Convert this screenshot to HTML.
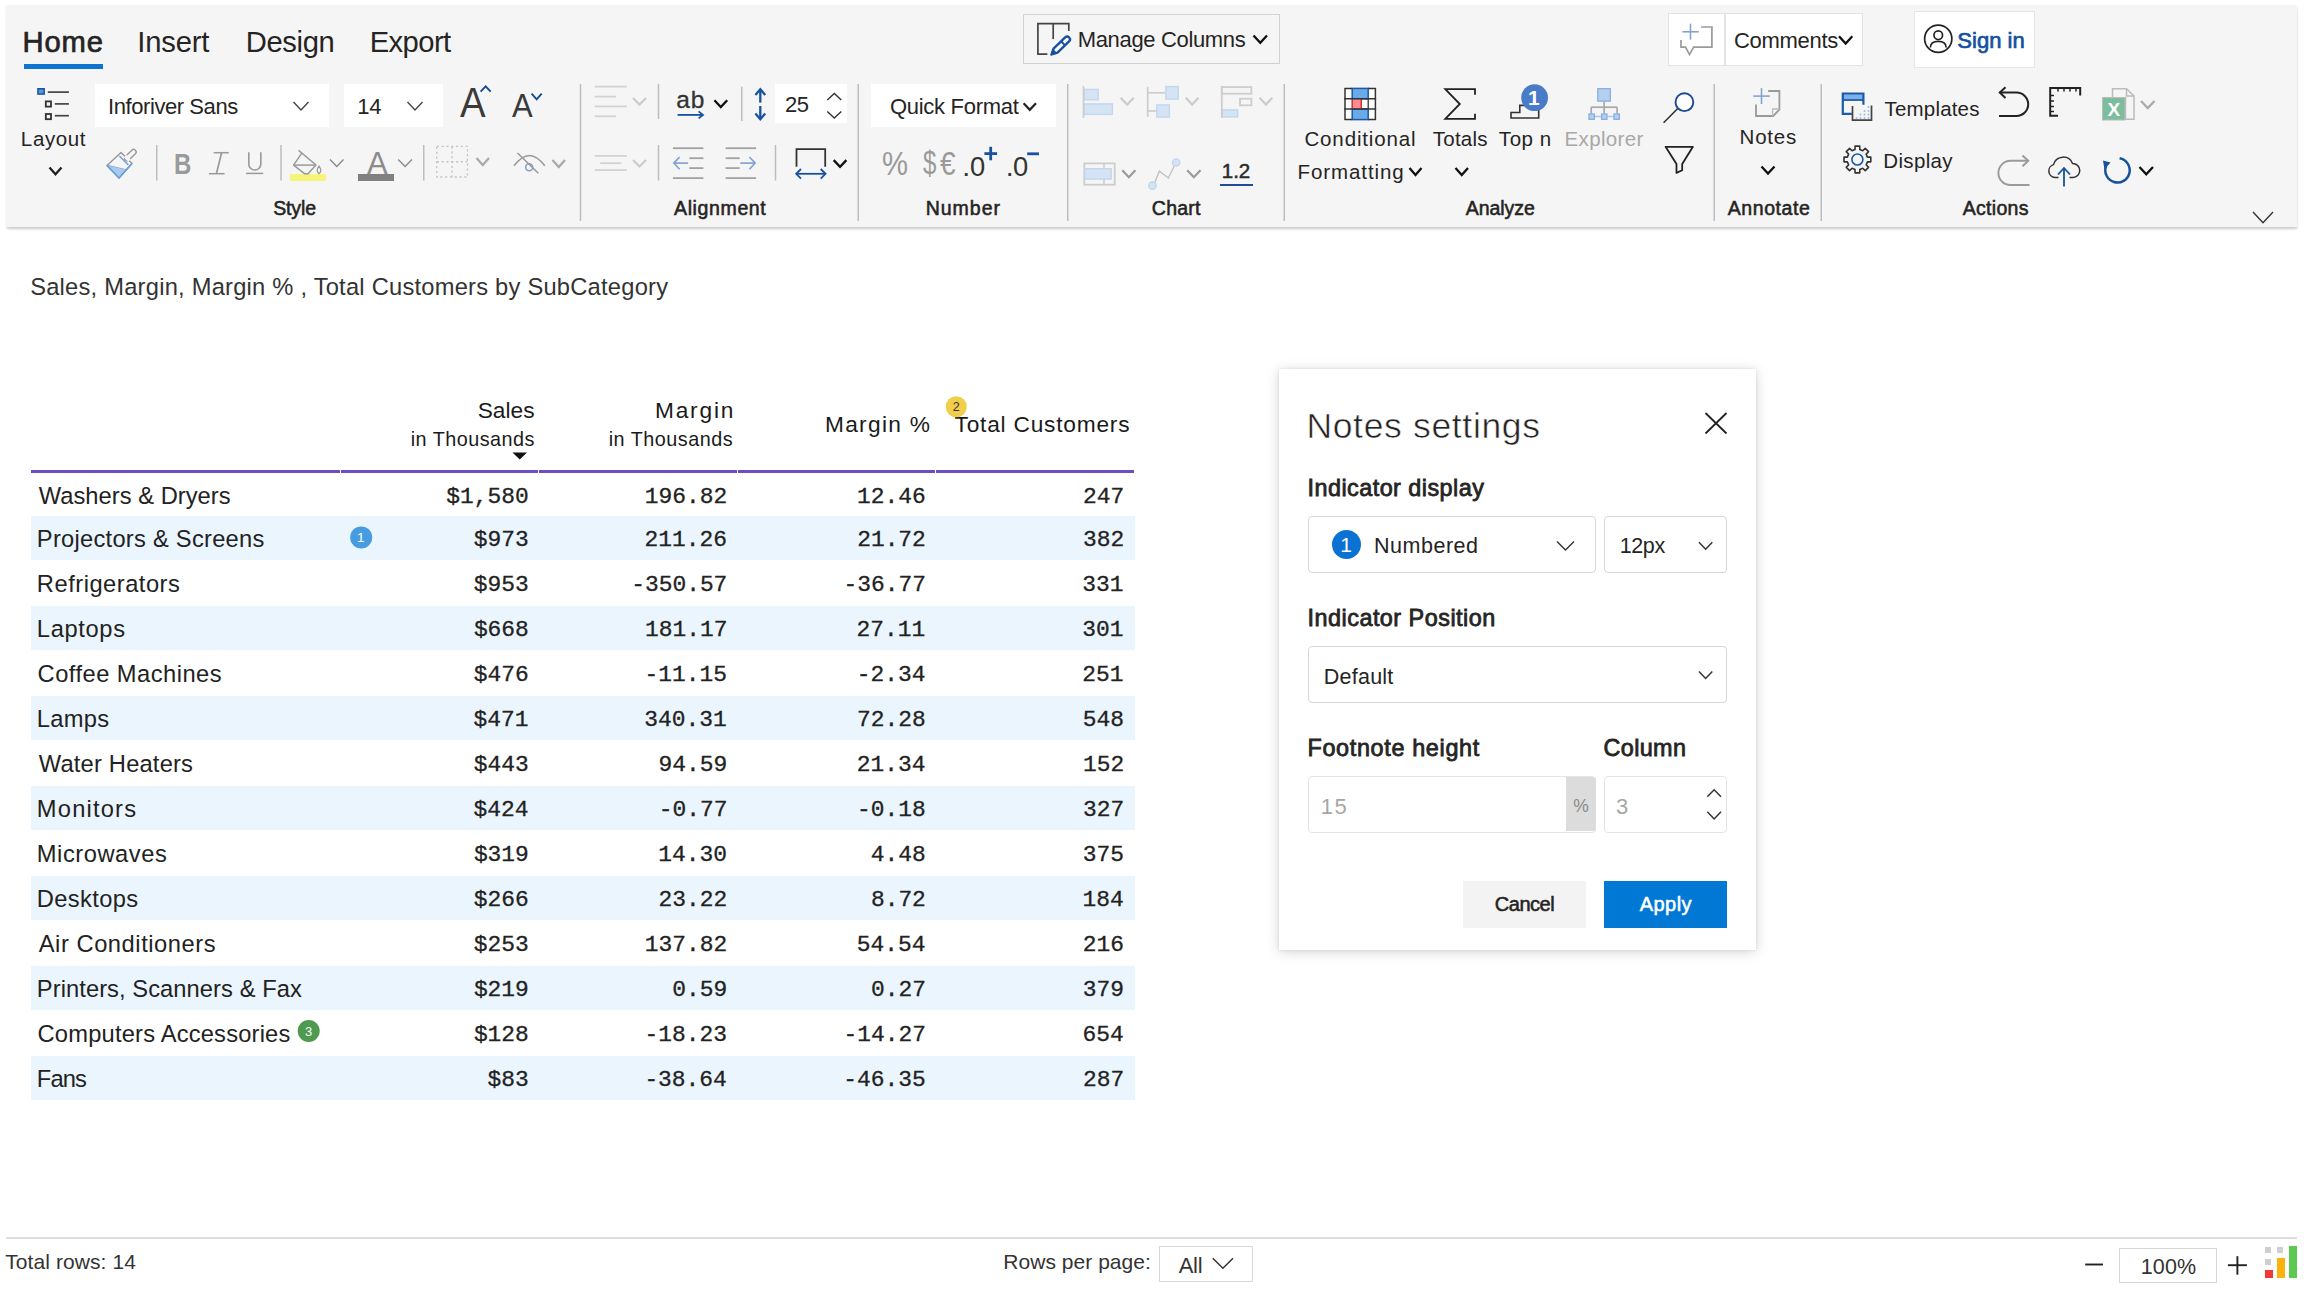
<!DOCTYPE html>
<html lang="en"><head><meta charset="utf-8"><title>Notes settings</title><style>
html,body{margin:0;padding:0;background:#fff;}
body{width:2304px;height:1293px;position:relative;overflow:hidden;font-family:"Liberation Sans",sans-serif;}
.t{position:absolute;white-space:pre;display:block;}
.b{position:absolute;}
#ov{position:absolute;left:0;top:0;pointer-events:none;}
</style></head><body>
<div class="b" style="left:6.00px;top:4.50px;width:2291.00px;height:222.50px;background:#f5f5f5;box-shadow:0 2px 2.5px -0.5px rgba(0,0,0,0.21);"></div>
<span class="t" style="left:22.61px;top:27px;font-size:29.2px;line-height:30px;color:#252423;letter-spacing:0.807px;-webkit-text-stroke:0.7px #252423;">Home</span>
<span class="t" style="left:137.37px;top:27px;font-size:29.2px;line-height:30px;color:#252423;letter-spacing:-0.188px;">Insert</span>
<span class="t" style="left:245.66px;top:27px;font-size:29.2px;line-height:30px;color:#252423;letter-spacing:-0.337px;">Design</span>
<span class="t" style="left:369.66px;top:27px;font-size:29.2px;line-height:30px;color:#252423;letter-spacing:-0.574px;">Export</span>
<div class="b" style="left:23.50px;top:63.50px;width:79.00px;height:5.00px;background:#0f73d2;"></div>
<div class="b" style="left:1022.50px;top:14.25px;width:257.00px;height:49.50px;border:1.5px solid #d2d2d2;box-sizing:border-box;"></div>
<span class="t" style="left:1077.74px;top:29px;font-size:22px;line-height:22px;color:#252423;letter-spacing:-0.343px;">Manage Columns</span>
<div class="b" style="left:1668.00px;top:12.50px;width:194.50px;height:53.75px;background:#fff;border:1.5px solid #e3e3e3;box-sizing:border-box;"></div>
<div class="b" style="left:1724.00px;top:14.00px;width:1.50px;height:51.00px;background:#e3e3e3;"></div>
<span class="t" style="left:1733.90px;top:30px;font-size:22px;line-height:22px;color:#252423;letter-spacing:-0.285px;">Comments</span>
<div class="b" style="left:1914.25px;top:11.25px;width:120.75px;height:56.75px;background:#fff;border:1.5px solid #e6e6e6;box-sizing:border-box;"></div>
<span class="t" style="left:1957.36px;top:30px;font-size:22px;line-height:22px;color:#14509f;letter-spacing:0.023px;-webkit-text-stroke:0.7px #14509f;">Sign in</span>
<div class="b" style="left:95.00px;top:84.00px;width:234.00px;height:43.00px;background:#fff;"></div>
<div class="b" style="left:344.00px;top:84.00px;width:98.50px;height:43.00px;background:#fff;"></div>
<span class="t" style="left:108.02px;top:96px;font-size:22px;line-height:22px;color:#252423;letter-spacing:-0.423px;">Inforiver Sans</span>
<span class="t" style="left:357.35px;top:96px;font-size:22px;line-height:22px;color:#252423;letter-spacing:-0.233px;">14</span>
<span class="t" style="left:20.86px;top:128px;font-size:20.5px;line-height:21px;color:#252423;letter-spacing:0.626px;">Layout</span>
<span class="t" style="left:460.20px;top:82px;font-size:41.7px;line-height:42px;color:#3a3a3a;transform:scaleX(0.92);transform-origin:0 0;">A</span>
<span class="t" style="left:511.80px;top:89px;font-size:32.8px;line-height:33px;color:#3a3a3a;transform:scaleX(0.945);transform-origin:0 0;">A</span>
<span class="t" style="left:173.75px;top:149px;font-size:30px;line-height:30px;font-weight:bold;color:#9a9a9a;transform:scaleX(0.8);transform-origin:0 0;">B</span>
<span class="t" style="left:367.00px;top:148px;font-size:31px;line-height:31px;color:#8c8c8c;">A</span>
<div class="b" style="left:290.00px;top:174.40px;width:35.75px;height:6.60px;background:#f5f57c;"></div>
<div class="b" style="left:358.30px;top:174.40px;width:36.00px;height:6.40px;background:#808080;"></div>
<span class="t" style="left:273.15px;top:198px;font-size:19.5px;line-height:20px;color:#252423;letter-spacing:-0.110px;-webkit-text-stroke:0.55px #252423;">Style</span>
<span class="t" style="left:676.17px;top:87px;font-size:24.5px;line-height:25px;color:#333;letter-spacing:1.052px;-webkit-text-stroke:0.3px #333;">ab</span>
<div class="b" style="left:775.00px;top:84.00px;width:71.75px;height:39.00px;background:#fff;"></div>
<span class="t" style="left:784.90px;top:94px;font-size:22px;line-height:22px;color:#252423;letter-spacing:-0.453px;">25</span>
<span class="t" style="left:674.02px;top:198px;font-size:19.5px;line-height:20px;color:#252423;letter-spacing:0.627px;-webkit-text-stroke:0.55px #252423;">Alignment</span>
<div class="b" style="left:870.75px;top:84.00px;width:185.25px;height:43.00px;background:#fff;"></div>
<span class="t" style="left:890.01px;top:96px;font-size:22px;line-height:22px;color:#252423;letter-spacing:-0.297px;">Quick Format</span>
<span class="t" style="left:881.66px;top:148px;font-size:32.5px;line-height:33px;color:#9a9a9a;transform:scaleX(0.9);transform-origin:0 0;">%</span>
<span class="t" style="left:922.88px;top:147px;font-size:32.5px;line-height:33px;color:#9a9a9a;transform:scaleX(0.74);transform-origin:0 0;">$</span>
<span class="t" style="left:939.54px;top:148px;font-size:32.5px;line-height:33px;color:#9a9a9a;transform:scaleX(0.86);transform-origin:0 0;">€</span>
<span class="t" style="left:962.33px;top:152px;font-size:28.5px;line-height:29px;color:#333;">.</span>
<span class="t" style="left:969.50px;top:152px;font-size:28.5px;line-height:29px;color:#333;transform:scaleX(0.96);transform-origin:0 0;">0</span>
<span class="t" style="left:1005.73px;top:152px;font-size:28.5px;line-height:29px;color:#333;">.</span>
<span class="t" style="left:1012.90px;top:152px;font-size:28.5px;line-height:29px;color:#333;transform:scaleX(0.96);transform-origin:0 0;">0</span>
<span class="t" style="left:925.72px;top:198px;font-size:19.5px;line-height:20px;color:#252423;letter-spacing:0.976px;-webkit-text-stroke:0.55px #252423;">Number</span>
<span class="t" style="left:1221.81px;top:160px;font-size:20.5px;line-height:21px;color:#2a2a2a;letter-spacing:-0.018px;-webkit-text-stroke:0.5px #2a2a2a;">1.2</span>
<div class="b" style="left:1220.20px;top:183.90px;width:32.70px;height:2.10px;background:#1f4e96;"></div>
<span class="t" style="left:1151.80px;top:198px;font-size:19.5px;line-height:20px;color:#252423;letter-spacing:0.249px;-webkit-text-stroke:0.55px #252423;">Chart</span>
<span class="t" style="left:1304.47px;top:128px;font-size:20.5px;line-height:21px;color:#252423;letter-spacing:0.850px;">Conditional</span>
<span class="t" style="left:1297.61px;top:161px;font-size:20.5px;line-height:21px;color:#252423;letter-spacing:0.903px;">Formatting</span>
<span class="t" style="left:1432.84px;top:128px;font-size:20.5px;line-height:21px;color:#252423;letter-spacing:0.223px;">Totals</span>
<span class="t" style="left:1498.84px;top:128px;font-size:20.5px;line-height:21px;color:#252423;letter-spacing:0.565px;">Top n</span>
<span class="t" style="left:1564.61px;top:128px;font-size:20.5px;line-height:21px;color:#a8a8a8;letter-spacing:0.333px;">Explorer</span>
<span class="t" style="left:1465.78px;top:198px;font-size:19.5px;line-height:20px;color:#252423;letter-spacing:-0.057px;-webkit-text-stroke:0.55px #252423;">Analyze</span>
<span class="t" style="left:1739.61px;top:126px;font-size:20.5px;line-height:21px;color:#252423;letter-spacing:0.773px;">Notes</span>
<span class="t" style="left:1727.78px;top:198px;font-size:19.5px;line-height:20px;color:#252423;letter-spacing:0.567px;-webkit-text-stroke:0.55px #252423;">Annotate</span>
<span class="t" style="left:1884.59px;top:98px;font-size:20.5px;line-height:21px;color:#252423;letter-spacing:0.174px;">Templates</span>
<span class="t" style="left:1883.36px;top:150px;font-size:20.5px;line-height:21px;color:#252423;letter-spacing:0.316px;">Display</span>
<span class="t" style="left:1962.78px;top:198px;font-size:19.5px;line-height:20px;color:#252423;letter-spacing:0.278px;-webkit-text-stroke:0.55px #252423;">Actions</span>
<span class="t" style="left:30.18px;top:275px;font-size:23.7px;line-height:24px;color:#333;letter-spacing:0.235px;">Sales, Margin, Margin % , Total Customers by SubCategory</span>
<span class="t" style="left:477.73px;top:399px;font-size:22.7px;line-height:23px;color:#1a1a1a;letter-spacing:0.021px;">Sales</span>
<span class="t" style="left:410.71px;top:429px;font-size:19.8px;line-height:20px;color:#1a1a1a;letter-spacing:0.484px;">in Thousands</span>
<span class="t" style="left:654.93px;top:399px;font-size:22.7px;line-height:23px;color:#1a1a1a;letter-spacing:1.822px;">Margin</span>
<span class="t" style="left:608.71px;top:429px;font-size:19.8px;line-height:20px;color:#1a1a1a;letter-spacing:0.507px;">in Thousands</span>
<span class="t" style="left:824.93px;top:413px;font-size:22.7px;line-height:23px;color:#1a1a1a;letter-spacing:1.322px;">Margin %</span>
<span class="t" style="left:954.55px;top:413px;font-size:22.7px;line-height:23px;color:#1a1a1a;letter-spacing:0.791px;">Total Customers</span>
<div class="b" style="left:30.75px;top:469.60px;width:308.85px;height:3.50px;background:#6a4fc0;"></div>
<div class="b" style="left:340.60px;top:469.60px;width:197.70px;height:3.50px;background:#6a4fc0;"></div>
<div class="b" style="left:539.30px;top:469.60px;width:197.30px;height:3.50px;background:#6a4fc0;"></div>
<div class="b" style="left:737.60px;top:469.60px;width:197.80px;height:3.50px;background:#6a4fc0;"></div>
<div class="b" style="left:936.40px;top:469.60px;width:198.10px;height:3.50px;background:#6a4fc0;"></div>
<div class="b" style="left:30.50px;top:515.50px;width:1104.50px;height:44.30px;background:#ebf5fe;"></div>
<div class="b" style="left:30.50px;top:605.50px;width:1104.50px;height:44.30px;background:#ebf5fe;"></div>
<div class="b" style="left:30.50px;top:695.50px;width:1104.50px;height:44.30px;background:#ebf5fe;"></div>
<div class="b" style="left:30.50px;top:785.50px;width:1104.50px;height:44.30px;background:#ebf5fe;"></div>
<div class="b" style="left:30.50px;top:875.50px;width:1104.50px;height:44.30px;background:#ebf5fe;"></div>
<div class="b" style="left:30.50px;top:965.50px;width:1104.50px;height:44.30px;background:#ebf5fe;"></div>
<div class="b" style="left:30.50px;top:1055.50px;width:1104.50px;height:44.30px;background:#ebf5fe;"></div>
<span class="t" style="left:38.75px;top:484px;font-size:23.7px;line-height:24px;color:#222;letter-spacing:0.037px;">Washers &amp; Dryers</span>
<span class="t" style="left:446.31px;top:486px;font-size:22.9px;line-height:23px;font-family:'Liberation Mono', monospace;color:#222;-webkit-text-stroke:0.3px #222;">$1,580</span>
<span class="t" style="left:644.84px;top:486px;font-size:22.9px;line-height:23px;font-family:'Liberation Mono', monospace;color:#222;-webkit-text-stroke:0.3px #222;">196.82</span>
<span class="t" style="left:856.95px;top:486px;font-size:22.9px;line-height:23px;font-family:'Liberation Mono', monospace;color:#222;-webkit-text-stroke:0.3px #222;">12.46</span>
<span class="t" style="left:1083.05px;top:486px;font-size:22.9px;line-height:23px;font-family:'Liberation Mono', monospace;color:#222;-webkit-text-stroke:0.3px #222;">247</span>
<span class="t" style="left:36.85px;top:527px;font-size:23.7px;line-height:24px;color:#222;letter-spacing:0.262px;">Projectors &amp; Screens</span>
<span class="t" style="left:473.78px;top:529px;font-size:22.9px;line-height:23px;font-family:'Liberation Mono', monospace;color:#222;-webkit-text-stroke:0.3px #222;">$973</span>
<span class="t" style="left:644.61px;top:529px;font-size:22.9px;line-height:23px;font-family:'Liberation Mono', monospace;color:#222;-webkit-text-stroke:0.3px #222;">211.26</span>
<span class="t" style="left:857.17px;top:529px;font-size:22.9px;line-height:23px;font-family:'Liberation Mono', monospace;color:#222;-webkit-text-stroke:0.3px #222;">21.72</span>
<span class="t" style="left:1082.94px;top:529px;font-size:22.9px;line-height:23px;font-family:'Liberation Mono', monospace;color:#222;-webkit-text-stroke:0.3px #222;">382</span>
<span class="t" style="left:36.85px;top:572px;font-size:23.7px;line-height:24px;color:#222;letter-spacing:0.509px;">Refrigerators</span>
<span class="t" style="left:473.78px;top:574px;font-size:22.9px;line-height:23px;font-family:'Liberation Mono', monospace;color:#222;-webkit-text-stroke:0.3px #222;">$953</span>
<span class="t" style="left:631.21px;top:574px;font-size:22.9px;line-height:23px;font-family:'Liberation Mono', monospace;color:#222;-webkit-text-stroke:0.3px #222;">-350.57</span>
<span class="t" style="left:843.56px;top:574px;font-size:22.9px;line-height:23px;font-family:'Liberation Mono', monospace;color:#222;-webkit-text-stroke:0.3px #222;">-36.77</span>
<span class="t" style="left:1082.37px;top:574px;font-size:22.9px;line-height:23px;font-family:'Liberation Mono', monospace;color:#222;-webkit-text-stroke:0.3px #222;">331</span>
<span class="t" style="left:36.85px;top:617px;font-size:23.7px;line-height:24px;color:#222;letter-spacing:0.650px;">Laptops</span>
<span class="t" style="left:473.89px;top:619px;font-size:22.9px;line-height:23px;font-family:'Liberation Mono', monospace;color:#222;-webkit-text-stroke:0.3px #222;">$668</span>
<span class="t" style="left:644.96px;top:619px;font-size:22.9px;line-height:23px;font-family:'Liberation Mono', monospace;color:#222;-webkit-text-stroke:0.3px #222;">181.17</span>
<span class="t" style="left:856.60px;top:619px;font-size:22.9px;line-height:23px;font-family:'Liberation Mono', monospace;color:#222;-webkit-text-stroke:0.3px #222;">27.11</span>
<span class="t" style="left:1082.37px;top:619px;font-size:22.9px;line-height:23px;font-family:'Liberation Mono', monospace;color:#222;-webkit-text-stroke:0.3px #222;">301</span>
<span class="t" style="left:37.56px;top:662px;font-size:23.7px;line-height:24px;color:#222;letter-spacing:0.479px;">Coffee Machines</span>
<span class="t" style="left:473.78px;top:664px;font-size:22.9px;line-height:23px;font-family:'Liberation Mono', monospace;color:#222;-webkit-text-stroke:0.3px #222;">$476</span>
<span class="t" style="left:644.61px;top:664px;font-size:22.9px;line-height:23px;font-family:'Liberation Mono', monospace;color:#222;-webkit-text-stroke:0.3px #222;">-11.15</span>
<span class="t" style="left:856.72px;top:664px;font-size:22.9px;line-height:23px;font-family:'Liberation Mono', monospace;color:#222;-webkit-text-stroke:0.3px #222;">-2.34</span>
<span class="t" style="left:1082.37px;top:664px;font-size:22.9px;line-height:23px;font-family:'Liberation Mono', monospace;color:#222;-webkit-text-stroke:0.3px #222;">251</span>
<span class="t" style="left:36.85px;top:707px;font-size:23.7px;line-height:24px;color:#222;letter-spacing:0.263px;">Lamps</span>
<span class="t" style="left:473.43px;top:709px;font-size:22.9px;line-height:23px;font-family:'Liberation Mono', monospace;color:#222;-webkit-text-stroke:0.3px #222;">$471</span>
<span class="t" style="left:644.27px;top:709px;font-size:22.9px;line-height:23px;font-family:'Liberation Mono', monospace;color:#222;-webkit-text-stroke:0.3px #222;">340.31</span>
<span class="t" style="left:857.06px;top:709px;font-size:22.9px;line-height:23px;font-family:'Liberation Mono', monospace;color:#222;-webkit-text-stroke:0.3px #222;">72.28</span>
<span class="t" style="left:1082.83px;top:709px;font-size:22.9px;line-height:23px;font-family:'Liberation Mono', monospace;color:#222;-webkit-text-stroke:0.3px #222;">548</span>
<span class="t" style="left:38.75px;top:752px;font-size:23.7px;line-height:24px;color:#222;letter-spacing:0.199px;">Water Heaters</span>
<span class="t" style="left:473.78px;top:754px;font-size:22.9px;line-height:23px;font-family:'Liberation Mono', monospace;color:#222;-webkit-text-stroke:0.3px #222;">$443</span>
<span class="t" style="left:658.46px;top:754px;font-size:22.9px;line-height:23px;font-family:'Liberation Mono', monospace;color:#222;-webkit-text-stroke:0.3px #222;">94.59</span>
<span class="t" style="left:856.72px;top:754px;font-size:22.9px;line-height:23px;font-family:'Liberation Mono', monospace;color:#222;-webkit-text-stroke:0.3px #222;">21.34</span>
<span class="t" style="left:1082.94px;top:754px;font-size:22.9px;line-height:23px;font-family:'Liberation Mono', monospace;color:#222;-webkit-text-stroke:0.3px #222;">152</span>
<span class="t" style="left:36.85px;top:797px;font-size:23.7px;line-height:24px;color:#222;letter-spacing:1.196px;">Monitors</span>
<span class="t" style="left:473.55px;top:799px;font-size:22.9px;line-height:23px;font-family:'Liberation Mono', monospace;color:#222;-webkit-text-stroke:0.3px #222;">$424</span>
<span class="t" style="left:658.69px;top:799px;font-size:22.9px;line-height:23px;font-family:'Liberation Mono', monospace;color:#222;-webkit-text-stroke:0.3px #222;">-0.77</span>
<span class="t" style="left:857.06px;top:799px;font-size:22.9px;line-height:23px;font-family:'Liberation Mono', monospace;color:#222;-webkit-text-stroke:0.3px #222;">-0.18</span>
<span class="t" style="left:1083.05px;top:799px;font-size:22.9px;line-height:23px;font-family:'Liberation Mono', monospace;color:#222;-webkit-text-stroke:0.3px #222;">327</span>
<span class="t" style="left:36.85px;top:842px;font-size:23.7px;line-height:24px;color:#222;letter-spacing:0.539px;">Microwaves</span>
<span class="t" style="left:473.89px;top:844px;font-size:22.9px;line-height:23px;font-family:'Liberation Mono', monospace;color:#222;-webkit-text-stroke:0.3px #222;">$319</span>
<span class="t" style="left:658.35px;top:844px;font-size:22.9px;line-height:23px;font-family:'Liberation Mono', monospace;color:#222;-webkit-text-stroke:0.3px #222;">14.30</span>
<span class="t" style="left:870.79px;top:844px;font-size:22.9px;line-height:23px;font-family:'Liberation Mono', monospace;color:#222;-webkit-text-stroke:0.3px #222;">4.48</span>
<span class="t" style="left:1082.71px;top:844px;font-size:22.9px;line-height:23px;font-family:'Liberation Mono', monospace;color:#222;-webkit-text-stroke:0.3px #222;">375</span>
<span class="t" style="left:36.85px;top:887px;font-size:23.7px;line-height:24px;color:#222;letter-spacing:0.363px;">Desktops</span>
<span class="t" style="left:473.78px;top:889px;font-size:22.9px;line-height:23px;font-family:'Liberation Mono', monospace;color:#222;-webkit-text-stroke:0.3px #222;">$266</span>
<span class="t" style="left:658.57px;top:889px;font-size:22.9px;line-height:23px;font-family:'Liberation Mono', monospace;color:#222;-webkit-text-stroke:0.3px #222;">23.22</span>
<span class="t" style="left:870.91px;top:889px;font-size:22.9px;line-height:23px;font-family:'Liberation Mono', monospace;color:#222;-webkit-text-stroke:0.3px #222;">8.72</span>
<span class="t" style="left:1082.48px;top:889px;font-size:22.9px;line-height:23px;font-family:'Liberation Mono', monospace;color:#222;-webkit-text-stroke:0.3px #222;">184</span>
<span class="t" style="left:38.75px;top:932px;font-size:23.7px;line-height:24px;color:#222;letter-spacing:0.552px;">Air Conditioners</span>
<span class="t" style="left:473.78px;top:934px;font-size:22.9px;line-height:23px;font-family:'Liberation Mono', monospace;color:#222;-webkit-text-stroke:0.3px #222;">$253</span>
<span class="t" style="left:644.84px;top:934px;font-size:22.9px;line-height:23px;font-family:'Liberation Mono', monospace;color:#222;-webkit-text-stroke:0.3px #222;">137.82</span>
<span class="t" style="left:856.72px;top:934px;font-size:22.9px;line-height:23px;font-family:'Liberation Mono', monospace;color:#222;-webkit-text-stroke:0.3px #222;">54.54</span>
<span class="t" style="left:1082.71px;top:934px;font-size:22.9px;line-height:23px;font-family:'Liberation Mono', monospace;color:#222;-webkit-text-stroke:0.3px #222;">216</span>
<span class="t" style="left:36.85px;top:977px;font-size:23.7px;line-height:24px;color:#222;letter-spacing:0.072px;">Printers, Scanners &amp; Fax</span>
<span class="t" style="left:473.89px;top:979px;font-size:22.9px;line-height:23px;font-family:'Liberation Mono', monospace;color:#222;-webkit-text-stroke:0.3px #222;">$219</span>
<span class="t" style="left:672.19px;top:979px;font-size:22.9px;line-height:23px;font-family:'Liberation Mono', monospace;color:#222;-webkit-text-stroke:0.3px #222;">0.59</span>
<span class="t" style="left:871.02px;top:979px;font-size:22.9px;line-height:23px;font-family:'Liberation Mono', monospace;color:#222;-webkit-text-stroke:0.3px #222;">0.27</span>
<span class="t" style="left:1082.83px;top:979px;font-size:22.9px;line-height:23px;font-family:'Liberation Mono', monospace;color:#222;-webkit-text-stroke:0.3px #222;">379</span>
<span class="t" style="left:37.56px;top:1022px;font-size:23.7px;line-height:24px;color:#222;letter-spacing:0.199px;">Computers Accessories</span>
<span class="t" style="left:473.89px;top:1024px;font-size:22.9px;line-height:23px;font-family:'Liberation Mono', monospace;color:#222;-webkit-text-stroke:0.3px #222;">$128</span>
<span class="t" style="left:644.61px;top:1024px;font-size:22.9px;line-height:23px;font-family:'Liberation Mono', monospace;color:#222;-webkit-text-stroke:0.3px #222;">-18.23</span>
<span class="t" style="left:843.56px;top:1024px;font-size:22.9px;line-height:23px;font-family:'Liberation Mono', monospace;color:#222;-webkit-text-stroke:0.3px #222;">-14.27</span>
<span class="t" style="left:1082.48px;top:1024px;font-size:22.9px;line-height:23px;font-family:'Liberation Mono', monospace;color:#222;-webkit-text-stroke:0.3px #222;">654</span>
<span class="t" style="left:36.85px;top:1067px;font-size:23.7px;line-height:24px;color:#222;letter-spacing:-0.863px;">Fans</span>
<span class="t" style="left:487.51px;top:1069px;font-size:22.9px;line-height:23px;font-family:'Liberation Mono', monospace;color:#222;-webkit-text-stroke:0.3px #222;">$83</span>
<span class="t" style="left:644.38px;top:1069px;font-size:22.9px;line-height:23px;font-family:'Liberation Mono', monospace;color:#222;-webkit-text-stroke:0.3px #222;">-38.64</span>
<span class="t" style="left:843.21px;top:1069px;font-size:22.9px;line-height:23px;font-family:'Liberation Mono', monospace;color:#222;-webkit-text-stroke:0.3px #222;">-46.35</span>
<span class="t" style="left:1083.05px;top:1069px;font-size:22.9px;line-height:23px;font-family:'Liberation Mono', monospace;color:#222;-webkit-text-stroke:0.3px #222;">287</span>
<div class="b" style="left:1279.25px;top:368.75px;width:476.50px;height:581.25px;background:#fff;box-shadow:0 2px 12px rgba(0,0,0,0.17),0 0 3px rgba(0,0,0,0.09);"></div>
<span class="t" style="left:1306.41px;top:408px;font-size:35.5px;line-height:36px;color:#252423;letter-spacing:0.668px;-webkit-text-stroke:0.55px #fff;">Notes settings</span>
<span class="t" style="left:1307.54px;top:476px;font-size:23.4px;line-height:24px;color:#252423;letter-spacing:0.456px;-webkit-text-stroke:0.8px #252423;">Indicator display</span>
<div class="b" style="left:1308.25px;top:516.25px;width:287.50px;height:56.75px;background:#fff;border:1.5px solid #d6d6d6;box-sizing:border-box;border-radius:4px;"></div>
<div class="b" style="left:1603.75px;top:516.25px;width:123.00px;height:56.75px;background:#fff;border:1.5px solid #d6d6d6;box-sizing:border-box;border-radius:4px;"></div>
<span class="t" style="left:1374.03px;top:535px;font-size:21.5px;line-height:22px;color:#252423;letter-spacing:0.514px;">Numbered</span>
<span class="t" style="left:1619.64px;top:535px;font-size:21.5px;line-height:22px;color:#252423;letter-spacing:-0.360px;">12px</span>
<span class="t" style="left:1307.54px;top:606px;font-size:23.4px;line-height:24px;color:#252423;letter-spacing:0.488px;-webkit-text-stroke:0.8px #252423;">Indicator Position</span>
<div class="b" style="left:1308.25px;top:646.25px;width:418.50px;height:56.25px;background:#fff;border:1.5px solid #d6d6d6;box-sizing:border-box;border-radius:4px;"></div>
<span class="t" style="left:1323.78px;top:666px;font-size:21.5px;line-height:22px;color:#252423;letter-spacing:0.237px;">Default</span>
<span class="t" style="left:1307.53px;top:736px;font-size:23.4px;line-height:24px;color:#252423;letter-spacing:0.652px;-webkit-text-stroke:0.8px #252423;">Footnote height</span>
<span class="t" style="left:1603.48px;top:736px;font-size:23.4px;line-height:24px;color:#252423;letter-spacing:0.387px;-webkit-text-stroke:0.8px #252423;">Column</span>
<div class="b" style="left:1308.25px;top:776.25px;width:287.50px;height:56.25px;background:#fff;border:1.5px solid #e4e4e4;box-sizing:border-box;border-radius:4px;"></div>
<div class="b" style="left:1565.75px;top:777.00px;width:30.00px;height:54.00px;background:#dcdcdc;border-radius:0 3px 3px 0;"></div>
<div class="b" style="left:1603.75px;top:776.25px;width:123.00px;height:56.25px;background:#fff;border:1.5px solid #e4e4e4;box-sizing:border-box;border-radius:4px;"></div>
<span class="t" style="left:1320.85px;top:796px;font-size:22px;line-height:22px;color:#a6a6a6;letter-spacing:1.347px;">15</span>
<span class="t" style="left:1615.98px;top:796px;font-size:22px;line-height:22px;color:#a6a6a6;">3</span>
<span class="t" style="left:1573.14px;top:797px;font-size:17.5px;line-height:18px;color:#8a8a8a;">%</span>
<div class="b" style="left:1463.25px;top:880.50px;width:122.50px;height:47.50px;background:#f3f3f3;"></div>
<div class="b" style="left:1604.00px;top:880.50px;width:122.75px;height:47.50px;background:#0078d4;"></div>
<span class="t" style="left:1494.78px;top:894px;font-size:20px;line-height:20px;color:#252423;letter-spacing:-0.462px;-webkit-text-stroke:0.55px #252423;">Cancel</span>
<span class="t" style="left:1639.78px;top:894px;font-size:20px;line-height:20px;color:#fff;letter-spacing:0.425px;-webkit-text-stroke:0.55px #fff;">Apply</span>
<div class="b" style="left:5.60px;top:1237.00px;width:2291.40px;height:1.60px;background:#dedede;"></div>
<span class="t" style="left:5.18px;top:1251px;font-size:21px;line-height:21px;color:#333;letter-spacing:0.090px;">Total rows: 14</span>
<span class="t" style="left:1003.32px;top:1251px;font-size:21px;line-height:21px;color:#333;letter-spacing:0.035px;">Rows per page:</span>
<div class="b" style="left:1159.00px;top:1246.00px;width:93.80px;height:35.50px;background:#fff;border:1.6px solid #d8d8d8;box-sizing:border-box;"></div>
<span class="t" style="left:1178.75px;top:1255px;font-size:22px;line-height:22px;color:#333;letter-spacing:-0.301px;">All</span>
<div class="b" style="left:2119.00px;top:1248.30px;width:98.30px;height:35.20px;background:#fff;border:1.6px solid #d6d6d6;box-sizing:border-box;"></div>
<span class="t" style="left:2140.69px;top:1256px;font-size:21.5px;line-height:22px;color:#333;letter-spacing:0.138px;">100%</span>
<div class="b" style="left:2265.30px;top:1247.00px;width:6.10px;height:5.60px;background:#cfcfcf;"></div>
<div class="b" style="left:2277.40px;top:1247.00px;width:5.90px;height:5.60px;background:#cfcfcf;"></div>
<div class="b" style="left:2265.30px;top:1259.00px;width:6.10px;height:5.90px;background:#cfcfcf;"></div>
<div class="b" style="left:2264.50px;top:1270.10px;width:8.40px;height:7.80px;background:#f03a3a;"></div>
<div class="b" style="left:2276.70px;top:1258.10px;width:8.10px;height:19.80px;background:#fbb20a;"></div>
<div class="b" style="left:2288.90px;top:1245.70px;width:8.10px;height:32.20px;background:#5bc94f;"></div>
<span class="t" style="left:357.05px;top:531px;font-size:13.5px;line-height:14px;color:#fff;z-index:5;">1</span>
<span class="t" style="left:952.75px;top:401px;font-size:12.5px;line-height:13px;color:#333;z-index:5;">2</span>
<span class="t" style="left:305.12px;top:1025px;font-size:13px;line-height:13px;color:#fff;z-index:5;">3</span>
<span class="t" style="left:1340.35px;top:534px;font-size:21px;line-height:21px;color:#fff;z-index:5;">1</span>
<span class="t" style="left:1528.00px;top:87px;font-size:21px;line-height:21px;font-weight:bold;color:#fff;z-index:5;">1</span>
<span class="t" style="left:2107.38px;top:100px;font-size:19px;line-height:19px;font-weight:bold;color:#fff;z-index:5;">X</span>
<svg id="ov" width="2304" height="1293" viewBox="0 0 2304 1293">
<line x1="580.5" y1="84" x2="580.5" y2="221" stroke="#bdbdbd" stroke-width="1.5" stroke-linecap="butt" />
<line x1="858.25" y1="84" x2="858.25" y2="221" stroke="#bdbdbd" stroke-width="1.5" stroke-linecap="butt" />
<line x1="1067.75" y1="84" x2="1067.75" y2="221" stroke="#bdbdbd" stroke-width="1.5" stroke-linecap="butt" />
<line x1="1284.25" y1="84" x2="1284.25" y2="221" stroke="#bdbdbd" stroke-width="1.5" stroke-linecap="butt" />
<line x1="1714.25" y1="84" x2="1714.25" y2="221" stroke="#bdbdbd" stroke-width="1.5" stroke-linecap="butt" />
<line x1="1821.25" y1="84" x2="1821.25" y2="221" stroke="#bdbdbd" stroke-width="1.5" stroke-linecap="butt" />
<line x1="156.75" y1="145" x2="156.75" y2="180.5" stroke="#bdbdbd" stroke-width="1.5" stroke-linecap="butt" />
<line x1="281" y1="145" x2="281" y2="180.5" stroke="#bdbdbd" stroke-width="1.5" stroke-linecap="butt" />
<line x1="423.75" y1="145" x2="423.75" y2="180.5" stroke="#bdbdbd" stroke-width="1.5" stroke-linecap="butt" />
<line x1="658.5" y1="84" x2="658.5" y2="119" stroke="#bdbdbd" stroke-width="1.5" stroke-linecap="butt" />
<line x1="741.75" y1="86.75" x2="741.75" y2="121" stroke="#bdbdbd" stroke-width="1.5" stroke-linecap="butt" />
<line x1="658.5" y1="145" x2="658.5" y2="180.5" stroke="#bdbdbd" stroke-width="1.5" stroke-linecap="butt" />
<line x1="775.5" y1="145" x2="775.5" y2="180.5" stroke="#bdbdbd" stroke-width="1.5" stroke-linecap="butt" />
<rect x="37.95" y="88.75" width="6.2" height="5.3" stroke="#17529f" stroke-width="1.5" fill="#5b9bd5" rx="0" />
<line x1="47.8" y1="92.1" x2="68.9" y2="92.1" stroke="#444" stroke-width="1.7" stroke-linecap="butt" />
<line x1="54.8" y1="103.9" x2="68.9" y2="103.9" stroke="#444" stroke-width="1.7" stroke-linecap="butt" />
<line x1="54.8" y1="115.7" x2="68.9" y2="115.7" stroke="#444" stroke-width="1.7" stroke-linecap="butt" />
<rect x="45.8" y="101.4" width="5.2" height="5.2" stroke="#333" stroke-width="1.8" fill="none" rx="0" />
<rect x="45.8" y="114" width="5.2" height="5.2" stroke="#333" stroke-width="1.8" fill="none" rx="0" />
<path d="M49.5 167.5 L55.5 174.3 L61.5 167.5" stroke="#222" stroke-width="2.3" fill="none" stroke-linejoin="miter" stroke-linecap="butt" />
<path d="M293.5 102 L301.0 110 L308.5 102" stroke="#444" stroke-width="1.4" fill="none" stroke-linejoin="miter" stroke-linecap="butt" />
<path d="M407.5 102 L415.0 110 L422.5 102" stroke="#444" stroke-width="1.4" fill="none" stroke-linejoin="miter" stroke-linecap="butt" />
<path d="M480.6 91.7 L485.65 86.3 L490.7 91.7" stroke="#1a4a8f" stroke-width="1.9" fill="none" stroke-linejoin="miter" stroke-linecap="butt" />
<path d="M531.6 93.7 L536.6500000000001 99.4 L541.7 93.7" stroke="#1a4a8f" stroke-width="1.9" fill="none" stroke-linejoin="miter" stroke-linecap="butt" />
<path d="M107 165.5 L119 178 L132 163.5 L126 170 Z" stroke="#6a9ed8" stroke-width="1.4" fill="#a9c8ee" stroke-linejoin="round" stroke-linecap="butt" />
<path d="M107.3 165.6 L125.8 169.6 L119 177.6 Z" stroke="none" stroke-width="0" fill="#a9c8ee" stroke-linejoin="miter" stroke-linecap="butt" />
<path d="M107 165.5 L121 152.5 L132 163.5" stroke="#999" stroke-width="1.5" fill="none" stroke-linejoin="round" stroke-linecap="butt" />
<path d="M107 165.5 L119 178 L132 163.5" stroke="#6a9ed8" stroke-width="1.5" fill="none" stroke-linejoin="round" stroke-linecap="butt" />
<line x1="119.4" y1="156.1" x2="128.3" y2="165" stroke="#6a9ed8" stroke-width="1.4" stroke-linecap="butt" />
<line x1="127.2" y1="158.3" x2="133.6" y2="151.9" stroke="#999" stroke-width="6.4" stroke-linecap="round" />
<line x1="127.2" y1="158.3" x2="133.6" y2="151.9" stroke="#f5f5f5" stroke-width="3.6" stroke-linecap="round" />
<line x1="125" y1="156" x2="129.5" y2="160.5" stroke="#f5f5f5" stroke-width="3.6" stroke-linecap="butt" />
<line x1="213.7" y1="152.7" x2="228.8" y2="152.7" stroke="#9a9a9a" stroke-width="1.5" stroke-linecap="butt" />
<line x1="209" y1="173.7" x2="224.6" y2="173.7" stroke="#9a9a9a" stroke-width="1.5" stroke-linecap="butt" />
<line x1="221.6" y1="152.7" x2="216.4" y2="173.7" stroke="#9a9a9a" stroke-width="1.7" stroke-linecap="butt" />
<path d="M248.8 152.3 V164 A6 6 0 0 0 260.8 164 V152.3" stroke="#9a9a9a" stroke-width="1.6" fill="none" stroke-linejoin="miter" stroke-linecap="butt" />
<line x1="246" y1="173.4" x2="263.2" y2="173.4" stroke="#9a9a9a" stroke-width="1.5" stroke-linecap="butt" />
<path d="M298.6 150.4 L316 165 L308 173.8 H304.8 L293.6 165.2 L301.8 153.2" stroke="#9a9a9a" stroke-width="1.5" fill="none" stroke-linejoin="round" stroke-linecap="butt" />
<line x1="293.6" y1="165.1" x2="316" y2="165.1" stroke="#9a9a9a" stroke-width="1.5" stroke-linecap="butt" />
<path d="M319 166.2 Q322.6 171.2 319 173.6 Q315.4 171.2 319 166.2 Z" stroke="#9a9a9a" stroke-width="1.3" fill="none" stroke-linejoin="miter" stroke-linecap="butt" />
<path d="M330 159.5 L336.75 166.6 L343.5 159.5" stroke="#8a8a8a" stroke-width="1.4" fill="none" stroke-linejoin="miter" stroke-linecap="butt" />
<path d="M398.2 159.5 L405.1 166.6 L412 159.5" stroke="#8a8a8a" stroke-width="1.4" fill="none" stroke-linejoin="miter" stroke-linecap="butt" />
<rect x="436.75" y="146.3" width="30.7" height="30.7" stroke="#c4c4c4" stroke-width="1.3" fill="none" rx="0" stroke-dasharray="2.2 2.6"/>
<line x1="452" y1="146.5" x2="452" y2="177" stroke="#c4c4c4" stroke-width="1.3" stroke-linecap="butt" stroke-dasharray="2.2 2.6"/>
<line x1="436.75" y1="161.75" x2="467.25" y2="161.75" stroke="#c4c4c4" stroke-width="1.3" stroke-linecap="butt" stroke-dasharray="2.2 2.6"/>
<path d="M476.5 158 L482.75 165 L489 158" stroke="#aaa" stroke-width="2.3" fill="none" stroke-linejoin="miter" stroke-linecap="butt" />
<path d="M514 165.8 Q529.5 145 544.8 165.8" stroke="#9a9a9a" stroke-width="1.5" fill="none" stroke-linejoin="miter" stroke-linecap="butt" />
<circle cx="529.2" cy="167.3" r="3.5" stroke="#7f9fcf" stroke-width="1.5" fill="none"/>
<line x1="517.5" y1="153" x2="538.3" y2="173.3" stroke="#9a9a9a" stroke-width="1.5" stroke-linecap="butt" />
<path d="M552.5 160 L558.75 167 L565 160" stroke="#aaa" stroke-width="2.3" fill="none" stroke-linejoin="miter" stroke-linecap="butt" />
<line x1="594.7" y1="86.7" x2="626.8" y2="86.7" stroke="#d2d2d2" stroke-width="1.8" stroke-linecap="butt" />
<line x1="594.7" y1="96.6" x2="616.1" y2="96.6" stroke="#d2d2d2" stroke-width="1.8" stroke-linecap="butt" />
<line x1="594.7" y1="106.4" x2="626.8" y2="106.4" stroke="#d2d2d2" stroke-width="1.8" stroke-linecap="butt" />
<line x1="594.7" y1="116.3" x2="616.1" y2="116.3" stroke="#d2d2d2" stroke-width="1.8" stroke-linecap="butt" />
<path d="M633 98 L639.5 104.6 L646 98" stroke="#ccc" stroke-width="2.2" fill="none" stroke-linejoin="miter" stroke-linecap="butt" />
<line x1="594.7" y1="155.9" x2="626.8" y2="155.9" stroke="#d2d2d2" stroke-width="1.8" stroke-linecap="butt" />
<line x1="600.2" y1="163.2" x2="621.6" y2="163.2" stroke="#d2d2d2" stroke-width="1.8" stroke-linecap="butt" />
<line x1="594.7" y1="170.2" x2="626.8" y2="170.2" stroke="#d2d2d2" stroke-width="1.8" stroke-linecap="butt" />
<path d="M633 159.9 L639.5 166.5 L646 159.9" stroke="#ccc" stroke-width="2.2" fill="none" stroke-linejoin="miter" stroke-linecap="butt" />
<line x1="677.6" y1="114.9" x2="703" y2="114.9" stroke="#17529f" stroke-width="1.8" stroke-linecap="butt" />
<path d="M698.6 111.4 L703 114.9 L698.6 118.4" stroke="#17529f" stroke-width="1.8" fill="none" stroke-linejoin="miter" stroke-linecap="butt" />
<path d="M714.4 100.3 L720.8 107.1 L727.2 100.3" stroke="#111" stroke-width="2.3" fill="none" stroke-linejoin="miter" stroke-linecap="butt" />
<line x1="760.3" y1="89.5" x2="760.3" y2="102.6" stroke="#17529f" stroke-width="2.3" stroke-linecap="butt" />
<line x1="760.3" y1="106" x2="760.3" y2="118.5" stroke="#17529f" stroke-width="2.3" stroke-linecap="butt" />
<path d="M755.4 95 L760.3 89.3 L765.2 95" stroke="#17529f" stroke-width="2.3" fill="none" stroke-linejoin="miter" stroke-linecap="butt" />
<path d="M755.4 113.6 L760.3 119.2 L765.2 113.6" stroke="#17529f" stroke-width="2.3" fill="none" stroke-linejoin="miter" stroke-linecap="butt" />
<path d="M827.3 100 L834.3 93.4 L841.3 100" stroke="#333" stroke-width="1.4" fill="none" stroke-linejoin="miter" stroke-linecap="butt" />
<path d="M827.3 111.6 L834.3 118 L841.3 111.6" stroke="#333" stroke-width="1.4" fill="none" stroke-linejoin="miter" stroke-linecap="butt" />
<line x1="672.9" y1="148.2" x2="703.4" y2="148.2" stroke="#a2a2a2" stroke-width="1.8" stroke-linecap="butt" />
<line x1="672.9" y1="178.1" x2="703.4" y2="178.1" stroke="#a2a2a2" stroke-width="1.8" stroke-linecap="butt" />
<line x1="689.3" y1="158.2" x2="703.4" y2="158.2" stroke="#a2a2a2" stroke-width="1.8" stroke-linecap="butt" />
<line x1="689.3" y1="168.1" x2="703.4" y2="168.1" stroke="#a2a2a2" stroke-width="1.8" stroke-linecap="butt" />
<line x1="674" y1="163.1" x2="688.1" y2="163.1" stroke="#7f9fcf" stroke-width="1.6" stroke-linecap="butt" />
<path d="M679.6 157 L673.8 163.1 L679.6 169.3" stroke="#7f9fcf" stroke-width="1.6" fill="none" stroke-linejoin="miter" stroke-linecap="butt" />
<line x1="725.6" y1="148.2" x2="756.1" y2="148.2" stroke="#a2a2a2" stroke-width="1.8" stroke-linecap="butt" />
<line x1="725.6" y1="178.1" x2="756.1" y2="178.1" stroke="#a2a2a2" stroke-width="1.8" stroke-linecap="butt" />
<line x1="725.6" y1="158.2" x2="739.7" y2="158.2" stroke="#a2a2a2" stroke-width="1.8" stroke-linecap="butt" />
<line x1="725.6" y1="168.1" x2="739.7" y2="168.1" stroke="#a2a2a2" stroke-width="1.8" stroke-linecap="butt" />
<line x1="740.3" y1="163.1" x2="755" y2="163.1" stroke="#7f9fcf" stroke-width="1.6" stroke-linecap="butt" />
<path d="M749.4 157 L755.2 163.1 L749.4 169.3" stroke="#7f9fcf" stroke-width="1.6" fill="none" stroke-linejoin="miter" stroke-linecap="butt" />
<path d="M796.5 166.7 V149.2 H825.2 V166.7" stroke="#333" stroke-width="1.8" fill="none" stroke-linejoin="miter" stroke-linecap="butt" />
<line x1="796.3" y1="173.8" x2="825.4" y2="173.8" stroke="#17529f" stroke-width="1.8" stroke-linecap="butt" />
<path d="M801 169 L796.2 173.8 L801 178.6" stroke="#17529f" stroke-width="1.8" fill="none" stroke-linejoin="miter" stroke-linecap="butt" />
<path d="M820.7 169 L825.5 173.8 L820.7 178.6" stroke="#17529f" stroke-width="1.8" fill="none" stroke-linejoin="miter" stroke-linecap="butt" />
<path d="M833.7 160.1 L840.05 166.8 L846.4 160.1" stroke="#111" stroke-width="2.3" fill="none" stroke-linejoin="miter" stroke-linecap="butt" />
<path d="M1023.6 103.2 L1029.8 109.8 L1036 103.2" stroke="#222" stroke-width="2.2" fill="none" stroke-linejoin="miter" stroke-linecap="butt" />
<line x1="984.4" y1="153.6" x2="997.1" y2="153.6" stroke="#17529f" stroke-width="2.8" stroke-linecap="butt" />
<line x1="990.7" y1="146.8" x2="990.7" y2="160.3" stroke="#17529f" stroke-width="2.8" stroke-linecap="butt" />
<line x1="1027.2" y1="153.8" x2="1039" y2="153.8" stroke="#17529f" stroke-width="2.8" stroke-linecap="butt" />
<rect x="1084.2" y="89.4" width="14" height="10.4" stroke="#c3d6ee" stroke-width="1.4" fill="#d5e4f4" rx="0" />
<rect x="1084.2" y="103.9" width="28.2" height="10.5" stroke="#c3d6ee" stroke-width="1.4" fill="#d5e4f4" rx="0" />
<line x1="1083.5" y1="85.9" x2="1083.5" y2="117.8" stroke="#cdcdcd" stroke-width="1.7" stroke-linecap="butt" />
<path d="M1120.6 97.8 L1127.1999999999998 104.6 L1133.8 97.8" stroke="#ccc" stroke-width="2.2" fill="none" stroke-linejoin="miter" stroke-linecap="butt" />
<line x1="1147.7" y1="86.8" x2="1147.7" y2="116.9" stroke="#cdcdcd" stroke-width="1.7" stroke-linecap="butt" />
<line x1="1147.7" y1="92.8" x2="1165.5" y2="92.8" stroke="#cdcdcd" stroke-width="1.7" stroke-linecap="butt" />
<line x1="1147.7" y1="111" x2="1156.5" y2="111" stroke="#cdcdcd" stroke-width="1.7" stroke-linecap="butt" />
<rect x="1165.9" y="86.6" width="12.3" height="12.5" stroke="#c3d6ee" stroke-width="1.4" fill="#d5e4f4" rx="0" />
<rect x="1156.8" y="104.9" width="12.6" height="12.2" stroke="#c3d6ee" stroke-width="1.4" fill="#d5e4f4" rx="0" />
<path d="M1185.8 97.8 L1192.15 104.6 L1198.5 97.8" stroke="#ccc" stroke-width="2.2" fill="none" stroke-linejoin="miter" stroke-linecap="butt" />
<rect x="1221.8" y="87.1" width="29.6" height="6.6" stroke="#cdcdcd" stroke-width="1.8" fill="none" rx="0" />
<rect x="1240" y="98.7" width="11.4" height="6.6" stroke="#cdcdcd" stroke-width="1.8" fill="none" rx="0" />
<rect x="1222.4" y="109.9" width="15.3" height="7" stroke="#c3d6ee" stroke-width="1.4" fill="#d5e4f4" rx="0" />
<line x1="1221.8" y1="86.2" x2="1221.8" y2="117.8" stroke="#cdcdcd" stroke-width="1.8" stroke-linecap="butt" />
<path d="M1259.6 97.8 L1265.9499999999998 104.6 L1272.3 97.8" stroke="#ccc" stroke-width="2.2" fill="none" stroke-linejoin="miter" stroke-linecap="butt" />
<rect x="1084.3" y="163.4" width="30.4" height="21.3" stroke="#cdcdcd" stroke-width="1.8" fill="none" rx="0" />
<line x1="1104" y1="163.4" x2="1104" y2="184.7" stroke="#cdcdcd" stroke-width="1.6" stroke-linecap="butt" />
<rect x="1084.9" y="168.7" width="26.3" height="10.4" stroke="#c3d6ee" stroke-width="1.4" fill="#d5e4f4" rx="0" />
<path d="M1122.3 170.3 L1128.85 177.2 L1135.4 170.3" stroke="#999" stroke-width="2.2" fill="none" stroke-linejoin="miter" stroke-linecap="butt" />
<path d="M1154.8 182.5 L1159.3 171.2 L1168.4 178 L1174.2 166" stroke="#c2c2c2" stroke-width="1.4" fill="none" stroke-linejoin="miter" stroke-linecap="butt" />
<circle cx="1152.5" cy="185.7" r="3.7" stroke="#c0d4ec" stroke-width="1.3" fill="#d5e4f4"/>
<circle cx="1176.2" cy="162.5" r="3.7" stroke="#c0d4ec" stroke-width="1.3" fill="#d5e4f4"/>
<path d="M1187.2 170.3 L1193.85 177.2 L1200.5 170.3" stroke="#999" stroke-width="2.2" fill="none" stroke-linejoin="miter" stroke-linecap="butt" />
<rect x="1344.3" y="88.4" width="31.8" height="31.2" stroke="none" stroke-width="0" fill="#fff" rx="0" />
<rect x="1352.2" y="88.4" width="16" height="10.4" stroke="#1b5aab" stroke-width="1.5" fill="#6aaae8" rx="0" />
<rect x="1352.2" y="108.9" width="16" height="10.7" stroke="#1b5aab" stroke-width="1.5" fill="#6aaae8" rx="0" />
<rect x="1352.2" y="99.6" width="9.1" height="8.9" stroke="none" stroke-width="0" fill="#ff8a8f" rx="0" />
<line x1="1352.2" y1="99" x2="1352.2" y2="109" stroke="#d03030" stroke-width="1.5" stroke-linecap="butt" />
<line x1="1361.3" y1="99" x2="1361.3" y2="109" stroke="#d03030" stroke-width="1.5" stroke-linecap="butt" />
<path d="M1352.2 88.4 H1345 V119.6 H1352.2 M1368.2 88.4 H1375.4 V119.6 H1368.2" stroke="#333" stroke-width="1.5" fill="none" stroke-linejoin="miter" stroke-linecap="butt" />
<line x1="1344.3" y1="98.8" x2="1376.1" y2="98.8" stroke="#333" stroke-width="1.5" stroke-linecap="butt" />
<line x1="1344.3" y1="108.9" x2="1376.1" y2="108.9" stroke="#333" stroke-width="1.5" stroke-linecap="butt" />
<line x1="1368.2" y1="99" x2="1368.2" y2="109" stroke="#333" stroke-width="1.3" stroke-linecap="butt" />
<path d="M1409.5 168 L1415.5 175 L1421.5 168" stroke="#111" stroke-width="2.3" fill="none" stroke-linejoin="miter" stroke-linecap="butt" />
<path d="M1475 94.8 V89.2 H1445.3 L1459.8 104 L1445.3 118.8 H1475 V113.8" stroke="#222" stroke-width="1.8" fill="none" stroke-linejoin="miter" stroke-linecap="butt" />
<path d="M1455.5 168 L1461.75 175 L1468 168" stroke="#111" stroke-width="2.3" fill="none" stroke-linejoin="miter" stroke-linecap="butt" />
<path d="M1527 105.4 H1519.8 V112.5 H1511 V118 H1538.7 V108" stroke="#333" stroke-width="1.6" fill="none" stroke-linejoin="miter" stroke-linecap="butt" />
<circle cx="1534.6" cy="97.7" r="13.4" stroke="none" stroke-width="0" fill="#4a7bc8"/>
<line x1="1604.1" y1="101.5" x2="1604.1" y2="113.6" stroke="#a8a8a8" stroke-width="1.7" stroke-linecap="butt" />
<line x1="1591.2" y1="107.2" x2="1617.1" y2="107.2" stroke="#a8a8a8" stroke-width="1.7" stroke-linecap="butt" />
<line x1="1591.2" y1="107.2" x2="1591.2" y2="113.6" stroke="#a8a8a8" stroke-width="1.7" stroke-linecap="butt" />
<line x1="1617.1" y1="107.2" x2="1617.1" y2="113.6" stroke="#a8a8a8" stroke-width="1.7" stroke-linecap="butt" />
<line x1="1594" y1="116.5" x2="1614" y2="116.5" stroke="#a9c8ee" stroke-width="1.5" stroke-linecap="butt" />
<rect x="1597.8" y="88.7" width="12.5" height="12.4" stroke="#86aee2" stroke-width="1.3" fill="#b5d0ef" rx="0" />
<rect x="1589" y="114" width="5.3" height="5.3" stroke="#86aee2" stroke-width="1.3" fill="#b5d0ef" rx="0" />
<rect x="1601.6" y="114" width="5.3" height="5.3" stroke="#86aee2" stroke-width="1.3" fill="#b5d0ef" rx="0" />
<rect x="1614" y="114" width="5.3" height="5.3" stroke="#86aee2" stroke-width="1.3" fill="#b5d0ef" rx="0" />
<line x1="1677.5" y1="108.8" x2="1663.6" y2="122.8" stroke="#333" stroke-width="1.6" stroke-linecap="butt" />
<circle cx="1684.4" cy="102.2" r="8.9" stroke="#1a4a94" stroke-width="1.9" fill="#fff"/>
<path d="M1665.6 146.8 H1692.9 L1682.2 164 V170.3 L1676.5 172.9 V164 Z" stroke="#222" stroke-width="1.8" fill="none" stroke-linejoin="round" stroke-linecap="butt" />
<path d="M1768.2 91 H1779.4 V109.6 L1773.2 116 H1756 V104.6" stroke="#9a9a9a" stroke-width="1.8" fill="none" stroke-linejoin="miter" stroke-linecap="butt" />
<path d="M1779.4 109 H1772.6 V116" stroke="#bbb" stroke-width="1.3" fill="none" stroke-linejoin="miter" stroke-linecap="butt" />
<line x1="1753.3" y1="96.1" x2="1769.8" y2="96.1" stroke="#7f9fcf" stroke-width="1.5" stroke-linecap="butt" />
<line x1="1761.5" y1="88.1" x2="1761.5" y2="104.1" stroke="#7f9fcf" stroke-width="1.5" stroke-linecap="butt" />
<path d="M1761.5 166.5 L1768.0 173.5 L1774.5 166.5" stroke="#111" stroke-width="2.3" fill="none" stroke-linejoin="miter" stroke-linecap="butt" />
<rect x="1843" y="93.6" width="20.3" height="6" stroke="none" stroke-width="0" fill="#7db1ec" rx="0" />
<path d="M1851.8 113.8 H1842.8 V93.5 H1863.4 V104.7" stroke="#1b5aab" stroke-width="2.2" fill="none" stroke-linejoin="miter" stroke-linecap="butt" />
<line x1="1842.8" y1="100" x2="1863.4" y2="100" stroke="#1b5aab" stroke-width="1.8" stroke-linecap="butt" />
<path d="M1852.5 105.9 V120.2 H1871.5 V105.5" stroke="#444" stroke-width="1.7" fill="none" stroke-linejoin="miter" stroke-linecap="butt" />
<rect x="1867.7" y="106.2" width="1.6" height="1.6" stroke="none" stroke-width="0" fill="#8db8ec" rx="0" />
<rect x="1863.7" y="110.2" width="1.6" height="1.6" stroke="none" stroke-width="0" fill="#8db8ec" rx="0" />
<rect x="1867.7" y="110.2" width="1.6" height="1.6" stroke="none" stroke-width="0" fill="#8db8ec" rx="0" />
<rect x="1859.7" y="113.7" width="1.6" height="1.6" stroke="none" stroke-width="0" fill="#8db8ec" rx="0" />
<rect x="1863.7" y="113.7" width="1.6" height="1.6" stroke="none" stroke-width="0" fill="#8db8ec" rx="0" />
<rect x="1867.7" y="113.7" width="1.6" height="1.6" stroke="none" stroke-width="0" fill="#8db8ec" rx="0" />
<rect x="1855.7" y="117.2" width="1.6" height="1.6" stroke="none" stroke-width="0" fill="#8db8ec" rx="0" />
<rect x="1859.7" y="117.2" width="1.6" height="1.6" stroke="none" stroke-width="0" fill="#8db8ec" rx="0" />
<rect x="1863.7" y="117.2" width="1.6" height="1.6" stroke="none" stroke-width="0" fill="#8db8ec" rx="0" />
<rect x="1867.7" y="117.2" width="1.6" height="1.6" stroke="none" stroke-width="0" fill="#8db8ec" rx="0" />
<path d="M1870.80 157.16 L1870.80 161.84 L1867.42 161.90 L1866.18 164.88 L1868.53 167.32 L1865.22 170.63 L1862.78 168.28 L1859.80 169.52 L1859.74 172.90 L1855.06 172.90 L1855.00 169.52 L1852.02 168.28 L1849.58 170.63 L1846.27 167.32 L1848.62 164.88 L1847.38 161.90 L1844.00 161.84 L1844.00 157.16 L1847.38 157.10 L1848.62 154.12 L1846.27 151.68 L1849.58 148.37 L1852.02 150.72 L1855.00 149.48 L1855.06 146.10 L1859.74 146.10 L1859.80 149.48 L1862.78 150.72 L1865.22 148.37 L1868.53 151.68 L1866.18 154.12 L1867.42 157.10 Z" stroke="#333" stroke-width="1.6" fill="none" stroke-linejoin="round" stroke-linecap="butt" />
<circle cx="1857.4" cy="159.5" r="5.5" stroke="#1b5aab" stroke-width="1.6" fill="none"/>
<path d="M1999.5 92.6 H2016.5 A11.7 11.7 0 0 1 2016.5 116 H1999" stroke="#222" stroke-width="2" fill="none" stroke-linejoin="miter" stroke-linecap="butt" />
<path d="M2005.5 87.3 L1999.8 92.6 L2005.5 98" stroke="#222" stroke-width="2" fill="none" stroke-linejoin="miter" stroke-linecap="butt" />
<path d="M2058 115.8 H2050.2 V88 H2080.2 V95.5" stroke="#222" stroke-width="2" fill="none" stroke-linejoin="miter" stroke-linecap="butt" />
<line x1="2058" y1="88" x2="2058" y2="91.5" stroke="#222" stroke-width="1.5" stroke-linecap="butt" />
<line x1="2064" y1="88" x2="2064" y2="91.5" stroke="#222" stroke-width="1.5" stroke-linecap="butt" />
<line x1="2070" y1="88" x2="2070" y2="91.5" stroke="#222" stroke-width="1.5" stroke-linecap="butt" />
<line x1="2076" y1="88" x2="2076" y2="91.5" stroke="#222" stroke-width="1.5" stroke-linecap="butt" />
<line x1="2050" y1="95.5" x2="2054" y2="95.5" stroke="#222" stroke-width="1.5" stroke-linecap="butt" />
<line x1="2050" y1="101" x2="2054" y2="101" stroke="#222" stroke-width="1.5" stroke-linecap="butt" />
<line x1="2050" y1="106.5" x2="2054" y2="106.5" stroke="#222" stroke-width="1.5" stroke-linecap="butt" />
<line x1="2050" y1="111.5" x2="2054" y2="111.5" stroke="#222" stroke-width="1.5" stroke-linecap="butt" />
<path d="M2112.5 97 V88.7 H2126.5 L2134 96 V119.3 H2125" stroke="#bbb" stroke-width="1.5" fill="none" stroke-linejoin="miter" stroke-linecap="butt" />
<path d="M2126.5 88.7 V96 H2134" stroke="#bbb" stroke-width="1.5" fill="none" stroke-linejoin="miter" stroke-linecap="butt" />
<line x1="2125.5" y1="97" x2="2125.5" y2="119.3" stroke="#bbb" stroke-width="1.5" stroke-linecap="butt" />
<rect x="2102.5" y="97.6" width="22.5" height="22.4" stroke="#bbb" stroke-width="1" fill="#7cbd9d" rx="0" />
<path d="M2141 101 L2147.75 108 L2154.5 101" stroke="#aaa" stroke-width="2.3" fill="none" stroke-linejoin="miter" stroke-linecap="butt" />
<path d="M2028 160.8 H2010.5 A12.1 12.1 0 0 0 2010.5 185 H2029.5" stroke="#9a9a9a" stroke-width="1.9" fill="none" stroke-linejoin="miter" stroke-linecap="butt" />
<path d="M2022.5 155.5 L2028.3 160.8 L2022.5 166.3" stroke="#9a9a9a" stroke-width="1.9" fill="none" stroke-linejoin="miter" stroke-linecap="butt" />
<path d="M2058.5 177.5 H2055 A6.6 6.6 0 0 1 2053.5 164.6 A10 10 0 0 1 2072.5 163.5 A7 7 0 0 1 2073 177.5 H2069.5" stroke="#333" stroke-width="1.5" fill="none" stroke-linejoin="miter" stroke-linecap="butt" />
<line x1="2064" y1="186.5" x2="2064" y2="168" stroke="#17529f" stroke-width="1.8" stroke-linecap="butt" />
<path d="M2058 174.5 L2064 168 L2070 174.5" stroke="#17529f" stroke-width="1.8" fill="none" stroke-linejoin="miter" stroke-linecap="butt" />
<path d="M2119.62 158.29 A12.2 12.2 0 1 1 2106.04 166.13" stroke="#17529f" stroke-width="2.5" fill="none" stroke-linejoin="miter" stroke-linecap="butt" />
<polygon points="2103,160.5 2110.5,162.5 2104.5,169.5" fill="#17529f"/>
<path d="M2139.5 167 L2146.25 174.2 L2153 167" stroke="#111" stroke-width="2.3" fill="none" stroke-linejoin="miter" stroke-linecap="butt" />
<path d="M2253 212 L2263.0 222.8 L2273 212" stroke="#333" stroke-width="1.4" fill="none" stroke-linejoin="miter" stroke-linecap="butt" />
<path d="M1047.4 54.2 H1037.9 V23.7 H1068.8 V31" stroke="#444" stroke-width="1.7" fill="none" stroke-linejoin="miter" stroke-linecap="butt" />
<line x1="1053.2" y1="23.7" x2="1053.2" y2="39.1" stroke="#444" stroke-width="1.7" stroke-linecap="butt" />
<g transform="translate(1060.2,46.1) rotate(-44)"><path d="M-12 0 L-6.5 -2.8 H9.6 A2.8 2.8 0 0 1 9.6 2.8 H-6.5 Z" fill="#fff" stroke="#17529f" stroke-width="2.4" stroke-linejoin="round"/><path d="M-12.5 0 L-7.5 -2.6 V2.6 Z" fill="#17529f" stroke="#17529f" stroke-width="1"/><line x1="4" y1="-2.8" x2="4" y2="2.8" stroke="#17529f" stroke-width="2"/></g>
<path d="M1253.5 35.5 L1260.25 42.8 L1267 35.5" stroke="#111" stroke-width="2.3" fill="none" stroke-linejoin="miter" stroke-linecap="butt" />
<path d="M1701.1 27 H1711.9 V47.2 H1693.6 L1689.5 54.6 L1685.5 47.2 H1681 V39.9" stroke="#9a9a9a" stroke-width="1.7" fill="none" stroke-linejoin="miter" stroke-linecap="butt" />
<line x1="1682.4" y1="31.8" x2="1698.8" y2="31.8" stroke="#7f9fcf" stroke-width="1.5" stroke-linecap="butt" />
<line x1="1690.5" y1="23.7" x2="1690.5" y2="39.7" stroke="#7f9fcf" stroke-width="1.5" stroke-linecap="butt" />
<path d="M1839 36.3 L1845.65 43.5 L1852.3 36.3" stroke="#111" stroke-width="2.3" fill="none" stroke-linejoin="miter" stroke-linecap="butt" />
<circle cx="1938.25" cy="38.75" r="13.6" stroke="#222" stroke-width="1.7" fill="none"/>
<circle cx="1938.25" cy="35.2" r="4.3" stroke="#222" stroke-width="1.7" fill="none"/>
<path d="M1930.3 47.5 Q1930.5 41.3 1938.25 41.3 Q1946 41.3 1946.2 47.5" stroke="#222" stroke-width="1.7" fill="none" stroke-linejoin="miter" stroke-linecap="butt" />
<polygon points="512.5,452.6 527,452.6 519.75,459.6" fill="#111"/>
<line x1="1705.5" y1="413" x2="1726.5" y2="433.5" stroke="#222" stroke-width="1.8" stroke-linecap="butt" />
<line x1="1726.5" y1="413" x2="1705.5" y2="433.5" stroke="#222" stroke-width="1.8" stroke-linecap="butt" />
<circle cx="1346.5" cy="544.5" r="14.5" stroke="none" stroke-width="0" fill="#0b72d4"/>
<path d="M1557 541.5 L1565.5 550 L1574 541.5" stroke="#333" stroke-width="1.4" fill="none" stroke-linejoin="miter" stroke-linecap="butt" />
<path d="M1699 542.3 L1705.65 549.2 L1712.3 542.3" stroke="#333" stroke-width="1.5" fill="none" stroke-linejoin="miter" stroke-linecap="butt" />
<path d="M1699 671.5 L1705.65 678.5 L1712.3 671.5" stroke="#333" stroke-width="1.5" fill="none" stroke-linejoin="miter" stroke-linecap="butt" />
<path d="M1707.3 796.8 L1714.15 789.8 L1721 796.8" stroke="#333" stroke-width="1.5" fill="none" stroke-linejoin="miter" stroke-linecap="butt" />
<path d="M1707.3 811.8 L1714.15 819 L1721 811.8" stroke="#333" stroke-width="1.5" fill="none" stroke-linejoin="miter" stroke-linecap="butt" />
<path d="M1212.8 1258.2 L1222.9 1268.3 L1233 1258.2" stroke="#333" stroke-width="1.5" fill="none" stroke-linejoin="miter" stroke-linecap="butt" />
<line x1="2085.2" y1="1264.5" x2="2103" y2="1264.5" stroke="#222" stroke-width="1.9" stroke-linecap="butt" />
<line x1="2227.9" y1="1265.2" x2="2246.9" y2="1265.2" stroke="#222" stroke-width="1.9" stroke-linecap="butt" />
<line x1="2237.4" y1="1256.2" x2="2237.4" y2="1274.7" stroke="#222" stroke-width="1.9" stroke-linecap="butt" />
<circle cx="361.2" cy="537.4" r="11" stroke="none" stroke-width="0" fill="#479ce0"/>
<circle cx="956.25" cy="406.75" r="10.5" stroke="none" stroke-width="0" fill="#f0cd4a"/>
<circle cx="308.7" cy="1031" r="11" stroke="none" stroke-width="0" fill="#4e9a4e"/>
</svg>
</body></html>
